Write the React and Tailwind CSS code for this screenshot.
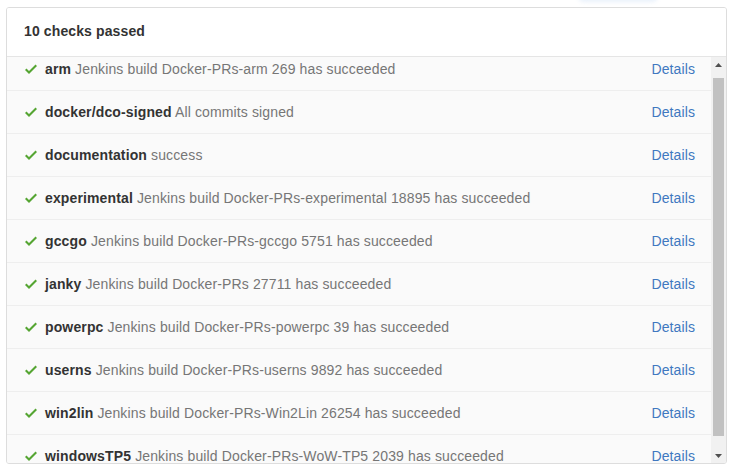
import React from 'react';

const checks = [
  { name: 'arm', desc: 'Jenkins build Docker-PRs-arm 269 has succeeded' },
  { name: 'docker/dco-signed', desc: 'All commits signed' },
  { name: 'documentation', desc: 'success' },
  { name: 'experimental', desc: 'Jenkins build Docker-PRs-experimental 18895 has succeeded' },
  { name: 'gccgo', desc: 'Jenkins build Docker-PRs-gccgo 5751 has succeeded' },
  { name: 'janky', desc: 'Jenkins build Docker-PRs 27711 has succeeded' },
  { name: 'powerpc', desc: 'Jenkins build Docker-PRs-powerpc 39 has succeeded' },
  { name: 'userns', desc: 'Jenkins build Docker-PRs-userns 9892 has succeeded' },
  { name: 'win2lin', desc: 'Jenkins build Docker-PRs-Win2Lin 26254 has succeeded' },
  { name: 'windowsTP5', desc: 'Jenkins build Docker-PRs-WoW-TP5 2039 has succeeded' }
];

const Check = () => (
  <svg width="12" height="16" viewBox="0 0 12 16" className="shrink-0 text-[#55a532]">
    <path d="M12 5l-8 8-4-4 1.5-1.5L4 10l6.5-6.5L12 5z" fill="currentColor" />
  </svg>
);

const App = () => {
  return (
    <div className="relative w-[732px] h-[472px] bg-white overflow-hidden font-['Liberation_Sans',Arial,sans-serif]">
      {/* faint button edge peeking at the top */}
      <div className="absolute -top-[10px] left-[578px] w-[80px] h-[12px] rounded-full bg-[#e9f1fb] blur-[2px]"></div>

      <div className="absolute left-[6px] top-[7px] w-[721px] h-[457px] border border-[#dddddd] rounded-[3px] flex flex-col overflow-hidden">
        {/* Header */}
        <div className="h-[49px] shrink-0 border-b border-[#e5e5e5] bg-white flex items-center pl-[17px] pb-[2px]">
          <span className="text-[14px] font-bold text-[#333333] tracking-[0.12px]">10 checks passed</span>
        </div>

        {/* List + scrollbar */}
        <div className="flex flex-1 min-h-0">
          <div className="flex-1 overflow-hidden bg-[#fafafa]">
            <div className="-mt-[9px]">
              {checks.map((c, i) => (
                <div
                  key={i}
                  className="h-[43px] border-b border-[#eeeeee] flex items-center pl-[18px] pr-[16px] text-[14px]"
                >
                  <Check />
                  <div className="ml-[8px] flex-1 whitespace-nowrap tracking-[0.13px]">
                    <span className="font-bold text-[#333333]">{c.name}</span>{' '}
                    <span className="text-[#767676]">{c.desc}</span>
                  </div>
                  <a href="#details" className="text-[#4078c0] tracking-[0.1px]">Details</a>
                </div>
              ))}
            </div>
          </div>

          {/* Scrollbar */}
          <div className="w-[15px] shrink-0 bg-[#f1f1f1] flex flex-col">
            <div className="h-[15px] flex items-center justify-center">
              <svg width="7" height="4" viewBox="0 0 7 4"><path d="M3.5 0L7 4H0z" fill="#505050" /></svg>
            </div>
            <div className="flex-1 px-[2px] pt-[6px] pb-[12px]">
              <div className="h-full bg-[#c1c1c1]"></div>
            </div>
            <div className="h-[15px] flex items-center justify-center">
              <svg width="7" height="4" viewBox="0 0 7 4"><path d="M0 0H7L3.5 4z" fill="#505050" /></svg>
            </div>
          </div>
        </div>
      </div>
    </div>
  );
};

export default App;
